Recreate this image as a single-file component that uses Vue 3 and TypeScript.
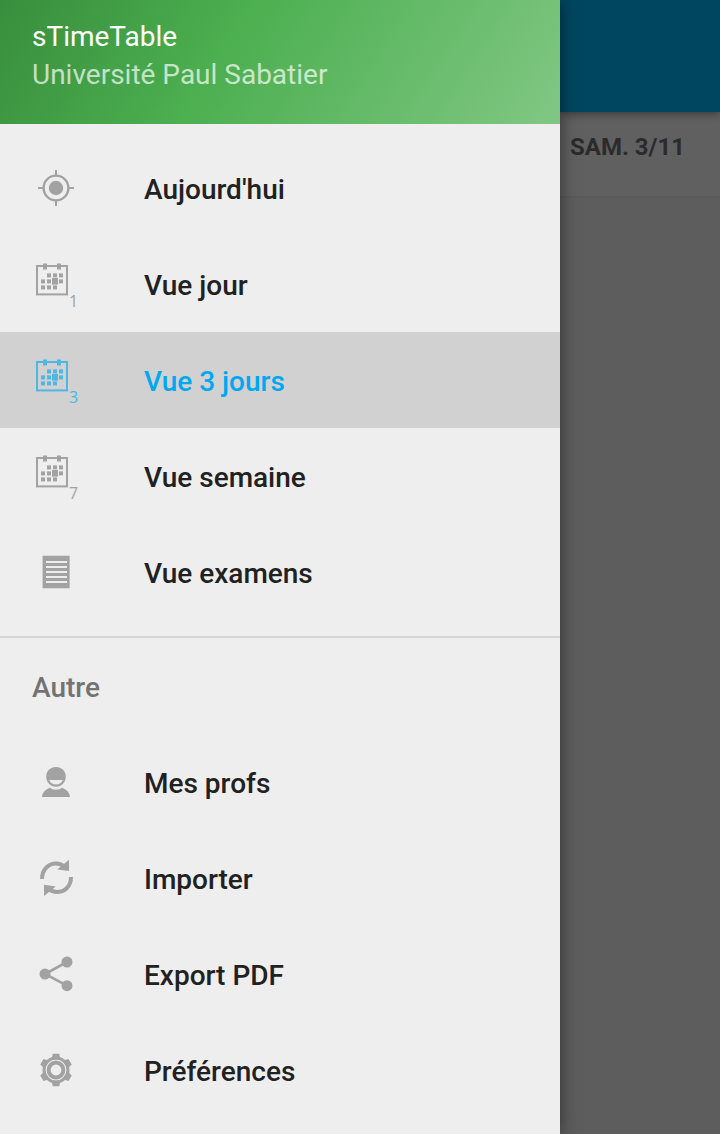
<script setup lang="ts">
import { ref } from 'vue'

interface Item {
  id: string
  label: string
  icon: 'target' | 'calendar' | 'list' | 'person' | 'sync' | 'share' | 'gear'
  days?: number
}

const views: Item[] = [
  { id: 'today', label: "Aujourd'hui", icon: 'target' },
  { id: 'day', label: 'Vue jour', icon: 'calendar', days: 1 },
  { id: 'three', label: 'Vue 3 jours', icon: 'calendar', days: 3 },
  { id: 'week', label: 'Vue semaine', icon: 'calendar', days: 7 },
  { id: 'exams', label: 'Vue examens', icon: 'list' },
]

const others: Item[] = [
  { id: 'teachers', label: 'Mes profs', icon: 'person' },
  { id: 'import', label: 'Importer', icon: 'sync' },
  { id: 'export', label: 'Export PDF', icon: 'share' },
  { id: 'settings', label: 'Préférences', icon: 'gear' },
]

const groups = [
  { title: '', items: views },
  { title: 'Autre', items: others },
]

const cells = [
  [15, 13], [21, 13], [27, 13],
  [9, 19], [15, 19], [27, 19],
  [9, 25], [15, 25], [21, 25],
]
const teeth = [0, 60, 120, 180, 240, 300]
const active = ref('three')
</script>

<template>
  <div class="screen">
    <nav class="drawer" aria-label="Menu">
      <header class="head">
        <div class="name">sTimeTable</div>
        <div class="school">Université Paul Sabatier</div>
      </header>
      <section v-for="group in groups" :key="group.title" class="group">
        <h2 v-if="group.title" class="title">{{ group.title }}</h2>
        <button
          v-for="item in group.items"
          :key="item.id"
          type="button"
          class="item"
          :class="{ active: active === item.id }"
          @click="active = item.id"
        >
          <svg class="icon" viewBox="0 0 48 48" aria-hidden="true">
            <g v-if="item.icon === 'target'">
              <circle cx="24" cy="24" r="7.2" />
              <circle class="line" cx="24" cy="24" r="12.4" stroke-width="2.4" />
              <path class="line" stroke-width="2" d="M24 6v6M24 36v6M6 24h6M36 24h6" />
            </g>
            <g v-else-if="item.icon === 'calendar'">
              <rect class="line" x="5" y="6" width="30" height="28.4" stroke-width="2" />
              <path d="M11 3.400h4v6.200h-4zM25 3.400h4v6.200h-4z" />
              <rect v-for="(c, i) in cells" :key="i" :x="c[0]" :y="c[1] + 0.4" width="4" height="4" />
              <rect x="20" y="18" width="6" height="6.6" />
              <text x="37" y="47">{{ item.days }}</text>
            </g>
            <path
              v-else-if="item.icon === 'list'"
              fill-rule="evenodd"
              d="M10.600 7.800h27v32.400h-27zM14 13v2h21v-2zM14 18v2h21v-2zM14 23v2h21v-2zM14 28v2h21v-2zM14 33v2h21v-2z"
            />
            <g v-else-if="item.icon === 'person'">
              <path
                fill-rule="evenodd"
                d="M24 9c6 0 9.8 4.4 9.8 9.8S29.5 28.8 24 28.8s-9.8-4.6-9.8-10S18 9 24 9zM17.2 22c1 3 3.6 4.4 6.8 4.4s5.800-1.400 6.800-4.400z"
              />
              <path d="M10 39c.4-4.500 3.600-7.500 7.800-9.200 1.600 1.300 3.800 2 6.200 2s4.600-.7 6.200-2c4.200 1.700 7.400 4.700 7.800 9.200z" />
            </g>
            <g v-else-if="item.icon === 'sync'">
              <path class="line" stroke-width="4" d="M10 25C10 15 17 9.500 24 9.500c4 0 6.500 1.500 8.500 3.500" />
              <path d="M37 5.700V17L25.200 15.400z" />
              <path class="line" stroke-width="4" d="M39 23C39 33 32 38 25 38c-4 0-6.500-1.500-8.500-3.300" />
              <path d="M12 42V30.800l11.800 1.600z" />
            </g>
            <g v-else-if="item.icon === 'share'">
              <path class="line" stroke-width="2.600" d="M35 12L13 24l22 11.700" />
              <circle cx="13" cy="24" r="5.500" />
              <circle cx="35" cy="12" r="5.500" />
              <circle cx="35" cy="35.700" r="5.500" />
            </g>
            <g v-else>
              <circle class="line" cx="24" cy="24" r="12" stroke-width="3" />
              <path
                v-for="angle in teeth"
                :key="angle"
                :transform="`rotate(${angle} 24 24)`"
                d="M16.800 14.200l3-2.200 1-4.300h6.400l1 4.300 3 2.200-4.200-.4q-3-.9-6 0z"
              />
              <circle class="line" cx="24" cy="24" r="7.400" stroke-width="4" />
            </g>
          </svg>
          <span>{{ item.label }}</span>
        </button>
      </section>
    </nav>
    <main class="page">
      <div class="bar"></div>
      <div class="day">SAM. 3/11</div>
    </main>
  </div>
</template>

<style>
body {
  margin: 0;
}
</style>

<style scoped>
.screen {
  display: flex;
  min-height: 100vh;
  overflow: hidden;
  background: #5d5d5d;
  font-family: Roboto, "Liberation Sans", sans-serif;
}

.drawer {
  position: relative;
  z-index: 1;
  flex: 1;
  background: #eeeeee;
  box-shadow: 0 0 16px rgba(0, 0, 0, 0.5);
}

.head {
  box-sizing: border-box;
  height: 124px;
  padding: 18px 32px 0;
  background: linear-gradient(123deg, #388e3c, #4caf50 40%, #81c784);
  color: #ffffff;
  font-size: 28px;
  line-height: 38px;
}

.school {
  color: rgba(255, 255, 255, 0.7);
}

.group:first-of-type {
  padding: 16px 0;
}

.group + .group {
  border-top: 2px solid #d4d4d4;
}

.title {
  box-sizing: border-box;
  height: 96px;
  margin: 0;
  padding: 2px 32px 0;
  color: #737373;
  font-size: 28px;
  font-weight: 500;
  line-height: 96px;
}

.item {
  display: flex;
  align-items: center;
  gap: 64px;
  width: 100%;
  height: 96px;
  padding: 2px 32px 0;
  border: 0;
  background: none;
  color: #212121;
  font: 500 28px Roboto, "Liberation Sans", sans-serif;
  text-align: left;
  cursor: pointer;
}

.item.active {
  background: #d1d1d1;
  color: #00a8f0;
}

.icon {
  flex: none;
  width: 48px;
  height: 48px;
  margin-bottom: 2px;
  overflow: visible;
  fill: #a2a2a2;
  stroke: none;
}

.icon .line {
  fill: none;
  stroke: #a2a2a2;
}

.icon text {
  font: 16px "Open Sans", sans-serif;
}

.active .icon {
  fill: #4fb7e4;
}

.active .icon .line {
  stroke: #4fb7e4;
}

.page {
  width: 160px;
  color: #2b2b2b;
}

.bar {
  position: relative;
  height: 112px;
  background: #004660;
  box-shadow: 0 2px 8px rgba(0, 0, 0, 0.4);
}

.day {
  box-sizing: border-box;
  height: 86px;
  padding-left: 10px;
  border-bottom: 2px solid #5b5b5b;
  background: #606060;
  font-size: 24px;
  font-weight: 700;
  line-height: 70px;
  white-space: nowrap;
}
</style>
